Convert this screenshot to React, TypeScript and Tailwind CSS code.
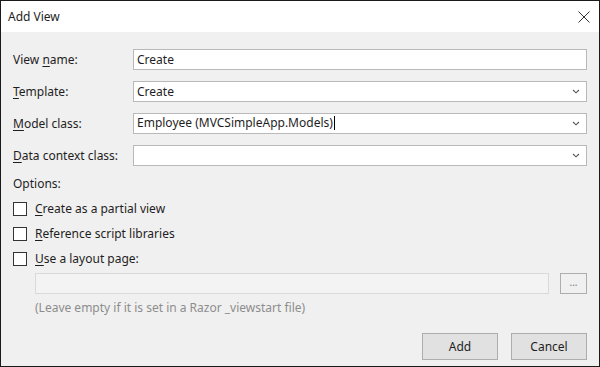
import React from 'react';

function Chevron() {
  return (
    <svg width="8" height="5" viewBox="0 0 8 5" className="shrink-0">
      <path d="M1 1 L4 3.8 L7 1" fill="none" stroke="#555" strokeWidth="1.1" />
    </svg>
  );
}

function Label({ pre = '', u, post }: { pre?: string; u: string; post: string }) {
  return (
    <span>
      {pre}
      <span className="underline underline-offset-2">{u}</span>
      {post}
    </span>
  );
}

function Row({ label, value, combo, caret }: { label: React.ReactNode; value: string; combo?: boolean; caret?: boolean }) {
  return (
    <div className="flex items-center h-[21px]">
      <div className="w-[120px] shrink-0">{label}</div>
      <div className="flex-1 h-[21px] bg-white border border-[#b9b9b9] flex items-center pl-[3px] pr-[6px]">
        <span className="flex-1 leading-none">
          {value}
          {caret && <span className="inline-block w-px h-[14px] bg-black align-middle ml-[1px] -mt-[2px]" />}
        </span>
        {combo && <Chevron />}
      </div>
    </div>
  );
}

function Check({ label }: { label: React.ReactNode }) {
  return (
    <div className="flex items-center h-[16px]">
      <div className="w-[14px] h-[14px] bg-white border border-[#333] shrink-0" />
      <div className="ml-[8px]">{label}</div>
    </div>
  );
}

export default function App() {
  return (
    <div className="w-[600px] h-[367px] border border-[#1a1a1a] flex flex-col font-['Noto_Sans',sans-serif] text-[12px] text-[#1e1e1e] overflow-hidden">
      <div className="h-[31px] bg-white flex items-center justify-between pl-[7px] pr-[9px] shrink-0">
        <span className="text-[12px]">Add View</span>
        <svg width="12" height="12" viewBox="0 0 12 12">
          <path d="M0.5 0.5 L11.5 11.5 M11.5 0.5 L0.5 11.5" stroke="#333" strokeWidth="1" fill="none" />
        </svg>
      </div>
      <div className="flex-1 bg-[#f0f0f0] px-[12px] pt-[17px] flex flex-col">
        <div className="flex flex-col gap-[11px]">
          <Row label={<Label pre="View " u="n" post="ame:" />} value="Create" />
          <Row label={<Label u="T" post="emplate:" />} value="Create" combo />
          <Row label={<Label u="M" post="odel class:" />} value="Employee (MVCSimpleApp.Models)" combo caret />
          <Row label={<Label u="D" post="ata context class:" />} value="" combo />
        </div>
        <div className="mt-[10px] h-[16px] leading-[16px]">Options:</div>
        <div className="mt-[9px] flex flex-col gap-[9px]">
          <Check label={<Label u="C" post="reate as a partial view" />} />
          <Check label={<Label u="R" post="eference script libraries" />} />
          <Check label={<Label u="U" post="se a layout page:" />} />
        </div>
        <div className="mt-[6px] ml-[22px] flex items-center gap-[11px]">
          <div className="flex-1 h-[21px] bg-[#f3f3f3] border border-[#d9d9d9]" />
          <div className="w-[27px] h-[21px] border border-[#adadad] bg-[#f0f0f0] flex items-center justify-center text-[#777] text-[10px] leading-none pb-[3px]">...</div>
        </div>
        <div className="ml-[22px] mt-[6px] text-[#8d8d8d] h-[16px] leading-[16px]">(Leave empty if it is set in a Razor _viewstart file)</div>
        <div className="mt-auto mb-[6px] flex justify-end gap-[13px]">
          <button className="w-[76px] h-[27px] bg-[#e1e1e1] border border-[#adadad] text-[12px]">Add</button>
          <button className="w-[76px] h-[27px] bg-[#e1e1e1] border border-[#adadad] text-[12px]">Cancel</button>
        </div>
      </div>
    </div>
  );
}
